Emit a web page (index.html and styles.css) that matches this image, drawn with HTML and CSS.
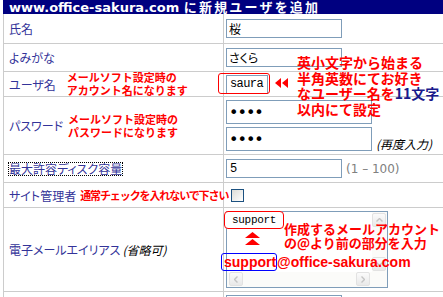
FILE: index.html
```html
<!DOCTYPE html>
<html lang="ja">
<head>
  <meta charset="UTF-8" />
  <title>新規ユーザを追加</title>
  <link rel="stylesheet" href="styles.css">
</head>
<body>
  <div class="page">
    <div class="title">www.office-sakura.com <span class="title-jp">に新規ユーザを追加</span></div>

    <div class="rows">
      <div class="row row-name">
        <div class="label">氏名</div>
        <div class="field"><input class="text" type="text" value="桜" /></div>
      </div>

      <div class="row row-kana">
        <div class="label">よみがな</div>
        <div class="field"><input class="text" type="text" value="さくら" /></div>
      </div>

      <div class="row row-user">
        <div class="label">ユーザ名<span class="note note-wide">メールソフト設定時の<br>アカウント名になります</span></div>
        <div class="field">
          <input class="text mono short" type="text" value="saura" />
          <span class="user-box"></span>
          <svg class="left-arrows" width="14" height="10" viewBox="0 0 14 10">
            <polygon points="0,5 6,0 6,10" fill="#f00" />
            <polygon points="7,5 13,0 13,10" fill="#f00" />
          </svg>
          <div class="user-tip">英小文字から始まる<br>半角英数にてお好き<br>なユーザー名を<em>11文字</em><br>以内にて設定</div>
        </div>
      </div>

      <div class="row row-pass">
        <div class="label">パスワード<span class="note">メールソフト設定時の<br>パスワードになります</span></div>
        <div class="field stack">
          <input class="text wide pass" type="password" value="abcd" />
          <div class="again">
            <input class="text wide pass" type="password" value="abcd" />
            <span class="hint">(再度入力)</span>
          </div>
        </div>
      </div>

      <div class="row row-disk">
        <div class="label"><span class="focus">最大許容ディスク容量</span></div>
        <div class="field">
          <input class="text mono" type="text" value="5" />
          <span class="range">(1 – 100)</span>
        </div>
      </div>

      <div class="row row-admin">
        <div class="label">サイト管理者<span class="note note-tight">通常チェックを入れないで下さい</span></div>
        <div class="field"><input class="check" type="checkbox" /></div>
      </div>

      <div class="row row-alias">
        <div class="label">電子メールエイリアス<span class="hint">(省略可)</span></div>
        <div class="field">
          <div class="memo">
            <div class="memo-body"></div>
            <div class="vbar">
              <span class="sb-btn"><svg width="7" height="4" viewBox="0 0 7 4"><polyline points="0.5,3.5 3.5,0.5 6.5,3.5" fill="none" stroke="#c4c4c4" stroke-width="1.4" /></svg></span>
              <span class="sb-btn"><svg width="7" height="4" viewBox="0 0 7 4"><polyline points="0.5,0.5 3.5,3.5 6.5,0.5" fill="none" stroke="#c4c4c4" stroke-width="1.4" /></svg></span>
            </div>
            <div class="hbar">
              <span class="sb-btn"><svg width="4" height="7" viewBox="0 0 4 7"><polyline points="3.5,0.5 0.5,3.5 3.5,6.5" fill="none" stroke="#c4c4c4" stroke-width="1.4" /></svg></span>
              <span class="sb-btn"><svg width="4" height="7" viewBox="0 0 4 7"><polyline points="0.5,0.5 3.5,3.5 0.5,6.5" fill="none" stroke="#c4c4c4" stroke-width="1.4" /></svg></span>
            </div>
            <div class="corner"></div>
          </div>

          <span class="callout-red">support</span>
          <svg class="up-arrows" width="15" height="13" viewBox="0 0 15 13">
            <polygon points="7.5,0 15,6 0,6" fill="#f00" />
            <polygon points="7.5,7 15,13 0,13" fill="#f00" />
          </svg>
          <div class="alias-line"><span class="alias-box">support</span>@office-sakura.com</div>
          <div class="alias-tip">作成するメールアカウント<br>の@より前の部分を入力</div>
        </div>
      </div>

      <div class="row row-next">
        <div class="label"></div>
        <div class="field top"><input class="text" type="text" value="" /></div>
      </div>
    </div>
  </div>
</body>
</html>
```

FILE: styles.css
```css
body {
  margin: 0;
  background: #fff;
  overflow: hidden;
  font-family: "DejaVu Sans", "Noto Sans CJK JP", sans-serif;
  font-size: 12px;
}

.page {
  margin-left: 3px;
  width: 480px;
}

.title {
  background: #000080;
  color: #fff;
  font-weight: bold;
  font-size: 13px;
  line-height: 14px;
  height: 14px;
  padding-left: 6px;
  white-space: nowrap;
}

.title-jp {
  font-family: "Noto Sans CJK JP", sans-serif;
  font-size: 13px;
  letter-spacing: 2.2px;
}

.rows {
  border-left: 1px solid #ccc;
}

.row {
  display: flex;
  border-bottom: 1px solid #ccc;
}

.row-name { height: 29px; }
.row-kana { height: 27px; }
.row-user { height: 24px; }
.row-pass { height: 57px; }
.row-disk { height: 27px; }
.row-admin { height: 24px; }
.row-alias { height: 83px; }
.row-next { height: 30px; }

.label {
  width: 220px;
  box-sizing: border-box;
  border-right: 1px solid #ccc;
  padding-left: 5px;
  display: flex;
  align-items: center;
  color: #333399;
  font-family: "Noto Sans CJK JP", sans-serif;
  font-feature-settings: "palt";
  white-space: nowrap;
}

.field {
  position: relative;
  flex: 1;
  padding-left: 2px;
  display: flex;
  align-items: center;
  gap: 4px;
}

.field.stack {
  flex-direction: column;
  align-items: flex-start;
  justify-content: center;
  gap: 3px;
}

.field.top {
  align-items: flex-start;
  padding-top: 3px;
}

.again {
  display: flex;
  align-items: flex-end;
  gap: 4px;
}

/* inputs */
.text {
  box-sizing: border-box;
  width: 116px;
  height: 19px;
  margin: 0;
  padding: 0 2px;
  border: 1px solid #7f9db9;
  background: #fff;
  color: #000;
  font: 12px "Noto Sans CJK JP", sans-serif;
  font-feature-settings: "palt";
  outline: none;
}

.text.mono {
  font-family: "Liberation Mono", monospace;
  font-size: 12px;
  letter-spacing: -0.6px;
  padding-left: 3px;
}

.text.short {
  width: 42px;
}

.text.wide {
  width: 146px;
  height: 24px;
}

.text.pass {
  font-family: "DejaVu Sans", sans-serif;
  font-size: 16px;
  letter-spacing: -1px;
}

.check {
  appearance: none;
  -webkit-appearance: none;
  width: 13px;
  height: 13px;
  margin: 0 0 0 5px;
  border: 1px solid #1c5180;
  background: linear-gradient(135deg, #dcdcd7, #fff);
}

/* notes */
.note {
  color: #f00;
  font-weight: bold;
  font-size: 11px;
  line-height: 13px;
  margin-left: 5px;
  font-feature-settings: normal;
}

.note-wide { margin-left: 11px; }
.note-tight { letter-spacing: -1.1px; margin-left: 4px; }

.hint {
  color: #000;
  font-style: italic;
  font-size: 12px;
  line-height: 14px;
  font-family: "Noto Sans CJK JP", sans-serif;
}

.label .hint {
  margin-left: 2px;
}

.range {
  color: #808080;
  font-family: "DejaVu Sans", sans-serif;
  font-size: 12px;
}

.focus {
  outline: 1px dotted #000;
  line-height: 12px;
}

/* annotations over the user row */
.user-box {
  position: absolute;
  left: -6px;
  top: 1px;
  width: 52px;
  height: 21px;
  box-sizing: border-box;
  border: 1px solid #f00;
  border-radius: 3px;
}

.left-arrows {
  position: absolute;
  left: 51px;
  top: 6px;
}

.user-tip {
  position: absolute;
  left: 73px;
  top: -17px;
  z-index: 1;
  color: #f00;
  font: bold 14px "Noto Sans CJK JP", sans-serif;
  line-height: 15.5px;
  white-space: nowrap;
}

.user-tip em {
  color: #1a1a8c;
  font-style: normal;
}

/* fake textarea */
.memo {
  width: 162px;
  height: 77px;
  box-sizing: border-box;
  border: 1px solid #7f9db9;
  background: #fff;
  display: grid;
  grid-template-columns: 1fr 15px;
  grid-template-rows: 1fr 15px;
}

.vbar {
  display: flex;
  flex-direction: column;
  justify-content: space-between;
  background: #fbfbf9;
  padding: 1px 1px 1px 0;
}

.hbar {
  display: flex;
  justify-content: space-between;
  background: #fbfbf9;
  padding: 0 2px 1px 2px;
}

.corner {
  background: #fbfbf9;
}

.sb-btn {
  width: 14px;
  height: 14px;
  box-sizing: border-box;
  border: 1px solid #e2e2e2;
  border-radius: 2px;
  background: linear-gradient(#fbfbfb, #e9e9e9);
  display: flex;
  align-items: center;
  justify-content: center;
}

/* annotations over the alias row */
.callout-red {
  position: absolute;
  left: 0;
  top: 3px;
  width: 60px;
  height: 18px;
  box-sizing: border-box;
  border: 1px solid #f00;
  border-radius: 4px;
  background: #fff;
  padding-left: 7px;
  font: 11px "Liberation Mono", monospace;
  line-height: 16px;
  letter-spacing: -0.3px;
}

.up-arrows {
  position: absolute;
  left: 21px;
  top: 24px;
}

.alias-line {
  position: absolute;
  left: -3px;
  top: 46px;
  color: #f00;
  font: bold 14px "Liberation Sans", sans-serif;
  line-height: 16px;
  white-space: nowrap;
}

.alias-box {
  border: 1px solid #00f;
  border-radius: 3px;
  padding-left: 2px;
}

.alias-tip {
  position: absolute;
  left: 60px;
  top: 14px;
  color: #f00;
  font: bold 13px "Noto Sans CJK JP", sans-serif;
  line-height: 14px;
  white-space: nowrap;
}
```
